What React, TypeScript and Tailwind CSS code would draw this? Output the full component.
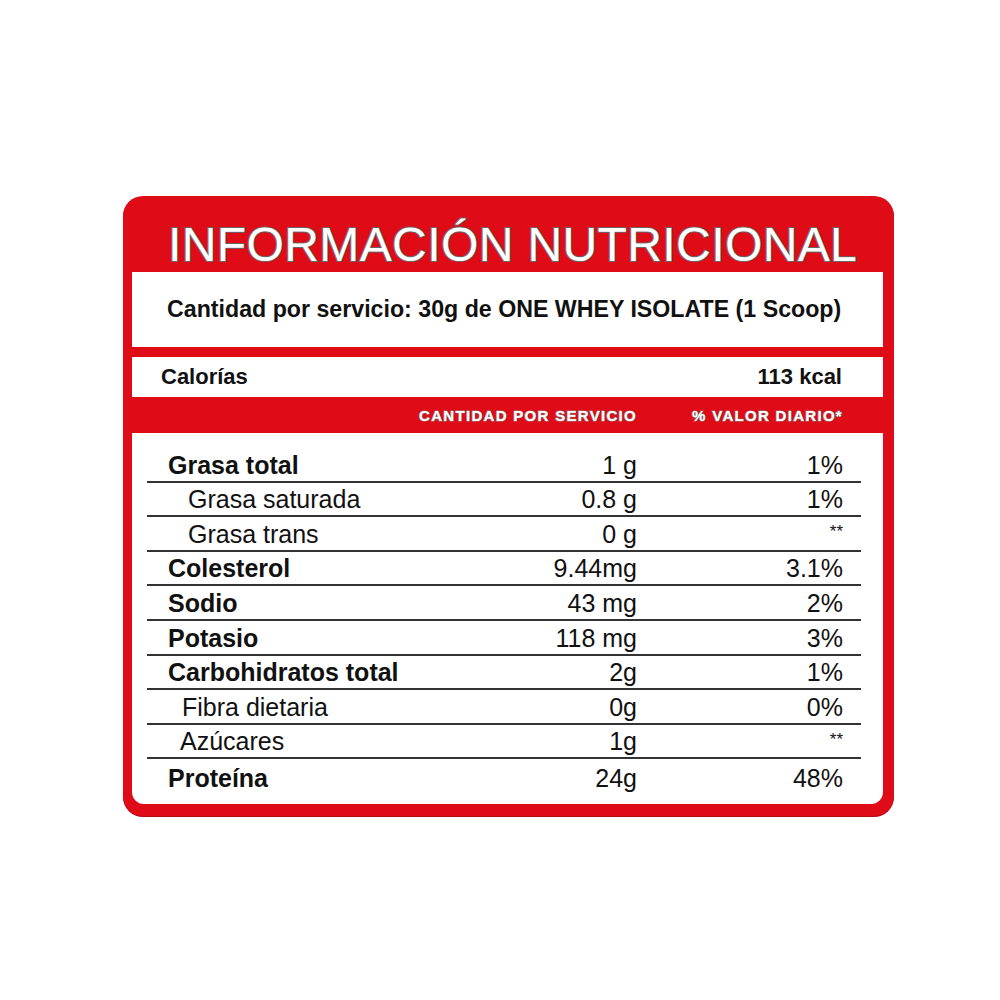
const rows = [
  { label: 'Grasa total', amount: '1 g', pct: '1%', bold: true, indent: 'pl-[21px]' },
  { label: 'Grasa saturada', amount: '0.8 g', pct: '1%', bold: false, indent: 'pl-[41px]' },
  { label: 'Grasa trans', amount: '0 g', pct: '**', bold: false, indent: 'pl-[41px]' },
  { label: 'Colesterol', amount: '9.44mg', pct: '3.1%', bold: true, indent: 'pl-[21px]' },
  { label: 'Sodio', amount: '43 mg', pct: '2%', bold: true, indent: 'pl-[21px]' },
  { label: 'Potasio', amount: '118 mg', pct: '3%', bold: true, indent: 'pl-[21px]' },
  { label: 'Carbohidratos total', amount: '2g', pct: '1%', bold: true, indent: 'pl-[21px]' },
  { label: 'Fibra dietaria', amount: '0g', pct: '0%', bold: false, indent: 'pl-[35px]' },
  { label: 'Azúcares', amount: '1g', pct: '**', bold: false, indent: 'pl-[33px]' },
  { label: 'Proteína', amount: '24g', pct: '48%', bold: true, indent: 'pl-[21px]' },
]

export default function App() {
  return (
    <div className="min-h-[1000px] w-[1000px] bg-white pl-[123px] pt-[196px] font-['Liberation_Sans',Arial,sans-serif] text-[#111]">
      <div className="w-[771px] rounded-[20px] bg-[#df0b17] pb-[12px] pl-[9px] pr-[11px] shadow-[0_1px_0_#b50a14]">
        {/* title */}
        <div className="h-[76px] pl-[36px] pt-[25px]">
          <h1 className="text-[48px] leading-none tracking-[0.4px] text-white [-webkit-text-stroke:2px_#666] [paint-order:stroke_fill]">
            INFORMACIÓN NUTRICIONAL
          </h1>
        </div>

        {/* serving */}
        <div className="flex h-[75px] items-center bg-white pl-[35px]">
          <p className="text-[23.2px] font-bold leading-none">
            Cantidad por servicio: 30g de ONE WHEY ISOLATE (1 Scoop)
          </p>
        </div>

        {/* calories */}
        <div className="mt-[10px] flex h-[40px] items-center justify-between bg-white pl-[29px] pr-[41px] text-[22px] font-bold leading-none">
          <span>Calorías</span>
          <span>113 kcal</span>
        </div>

        {/* column header */}
        <div className="ml-[15px] mr-[22px] flex h-[36px] items-center pr-[18px] text-[15px] font-bold leading-none tracking-[1.3px] text-white [-webkit-text-stroke:1.2px_#888] [paint-order:stroke_fill]">
          <span className="flex-1" />
          <span className="text-right">CANTIDAD POR SERVICIO</span>
          <span className="w-[206px] text-right">% VALOR DIARIO*</span>
        </div>

        {/* body */}
        <div className="rounded-b-[12px] bg-white pb-[10px] pl-[15px] pr-[22px] pt-[15px]">
          {rows.map((r, i) => (
            <div
              key={r.label}
              className={`flex h-[34.6px] items-end pb-[3px] pr-[18px] text-[25px] leading-none ${
                i < rows.length - 1 ? 'border-b-2 border-[#333]' : ''
              } ${r.indent}`}
            >
              <span className={`flex-1 ${r.bold ? 'font-bold' : ''}`}>{r.label}</span>
              <span className="text-right">{r.amount}</span>
              <span className={`w-[206px] text-right ${r.pct === '**' ? 'self-start pt-[6px] text-[17px]' : ''}`}>
                {r.pct}
              </span>
            </div>
          ))}
        </div>
      </div>
    </div>
  )
}
